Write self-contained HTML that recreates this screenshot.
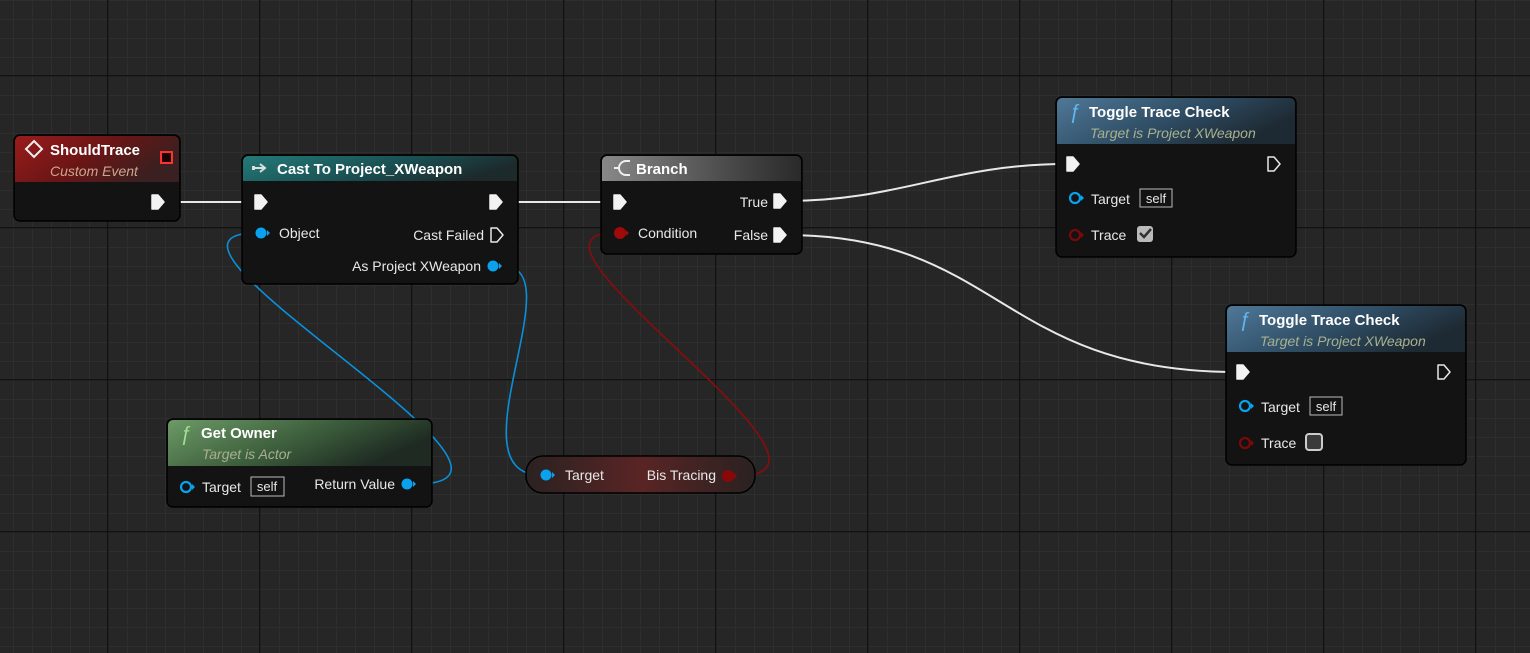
<!DOCTYPE html>
<html><head><meta charset="utf-8"><style>
html,body{margin:0;padding:0}
body{width:1530px;height:653px;overflow:hidden;background:#262626;
background-image:
linear-gradient(to right,#121212 0 1.5px,transparent 1.5px),
linear-gradient(to bottom,#121212 0 1.5px,transparent 1.5px),
linear-gradient(to right,#2e2e2e 0 1px,transparent 1px),
linear-gradient(to bottom,#2e2e2e 0 1px,transparent 1px);
background-size:152px 152px,152px 152px,19px 19px,19px 19px;
background-position:107px 75px,107px 75px,13px 0px,13px 0px;}
svg{position:absolute;left:0;top:0}
text{font-family:"Liberation Sans",sans-serif}
</style></head><body>
<svg width="1530" height="653" viewBox="0 0 1530 653">
<defs>
<linearGradient id="gr" x1="0" y1="0" x2="1" y2="0.4"><stop offset="0" stop-color="#9a1c1c"/><stop offset="0.55" stop-color="#6a1515"/><stop offset="1" stop-color="#3a2020"/></linearGradient>
<linearGradient id="gt" x1="0" y1="0" x2="1" y2="0.3"><stop offset="0" stop-color="#237a78"/><stop offset="0.6" stop-color="#1a4f52"/><stop offset="1" stop-color="#1d2a2c"/></linearGradient>
<linearGradient id="gg" x1="0" y1="0" x2="1" y2="0"><stop offset="0" stop-color="#888"/><stop offset="0.7" stop-color="#444"/><stop offset="1" stop-color="#2a2a2a"/></linearGradient>
<linearGradient id="gb" x1="0" y1="0" x2="1" y2="0.4"><stop offset="0" stop-color="#4f7898"/><stop offset="0.6" stop-color="#2d4a60"/><stop offset="1" stop-color="#1e2a33"/></linearGradient>
<linearGradient id="gn" x1="0" y1="0" x2="1" y2="0.4"><stop offset="0" stop-color="#6c9a66"/><stop offset="0.6" stop-color="#3a5a3a"/><stop offset="1" stop-color="#1e2a22"/></linearGradient>
<linearGradient id="gv" x1="0" y1="0" x2="1" y2="0"><stop offset="0" stop-color="#2a2222"/><stop offset="0.5" stop-color="#5a2424"/><stop offset="1" stop-color="#2a2222"/></linearGradient>
<g id="ex"><path d="M-6,-7 h6 l6,7 l-6,7 h-6 z" fill="#f2f2f2" stroke="#f2f2f2" stroke-width="1.5" stroke-linejoin="round"/></g>
<g id="exo"><path d="M-6,-7 h6 l6,7 l-6,7 h-6 z" fill="none" stroke="#e8e8e8" stroke-width="1.5" stroke-linejoin="round"/></g>
</defs>
<g fill="none" stroke-width="2">
<path d="M166,202 L256,202" stroke="#e8e8e8"/>
<path d="M503,202 L614,202" stroke="#e8e8e8"/>
<path d="M786,201 C 900,201 950,164 1067,164" stroke="#e8e8e8"/>
<path d="M786,235 C 1000,235 1000,372 1237,372" stroke="#e8e8e8"/>
<path d="M416,484 C 580,484 110,233 256,233" stroke="#0a8fd8" stroke-width="1.6"/>
<path d="M503,266 C 575,266 450,475 541,475" stroke="#0a8fd8" stroke-width="1.6"/>
<path d="M737,476 C 880,476 490,233 614,233" stroke="#8a0c0c" stroke-width="1.6"/>
</g>
<rect x="14" y="135" width="166" height="86" rx="6" fill="#121312" stroke="#000" stroke-width="1.5"/>
<path d="M20,136 h154 a5,5 0 0 1 5,5 v41 h-164 v-41 a5,5 0 0 1 5,-5z" fill="url(#gr)"/>
<path d="M34,141 l8,8 l-8,8 l-8,-8z" fill="none" stroke="#eee" stroke-width="2"/>
<text x="50" y="155" font-size="15" font-weight="bold" fill="#fff">ShouldTrace</text>
<text x="50" y="176" font-size="14" font-style="italic" fill="#c8a890">Custom Event</text>
<rect x="161" y="152" width="11" height="11" fill="#1a0000" stroke="#ff3030" stroke-width="2"/>
<use href="#ex" x="158" y="202"/>
<rect x="242" y="155" width="276" height="129" rx="6" fill="#121312" stroke="#000" stroke-width="1.5"/>
<path d="M248,156 h264 a5,5 0 0 1 5,5 v20 h-274 v-20 a5,5 0 0 1 5,-5z" fill="url(#gt)"/>
<path d="M252,168 h12 M260,164 l5,4 l-5,4" stroke="#ddd" stroke-width="2" fill="none"/><rect x="252" y="166" width="3" height="4" fill="#ddd"/>
<text x="277" y="174" font-size="15" font-weight="bold" fill="#fff">Cast To Project_XWeapon</text>
<use href="#ex" x="261" y="202"/><use href="#ex" x="496" y="202"/>
<circle cx="261" cy="233" r="5.5" fill="#0aa2ee"/><path d="M267,230 l3,3 l-3,3z" fill="#0aa2ee"/>
<text x="279" y="238" font-size="14" fill="#e8e8e8">Object</text>
<text x="484" y="240" font-size="14" fill="#e8e8e8" text-anchor="end">Cast Failed</text>
<use href="#exo" x="497" y="235"/>
<text x="481" y="271" font-size="14" fill="#e8e8e8" text-anchor="end">As Project XWeapon</text>
<circle cx="493" cy="266" r="5.5" fill="#0aa2ee"/><path d="M499,263 l3,3 l-3,3z" fill="#0aa2ee"/>
<rect x="601" y="155" width="201" height="99" rx="6" fill="#121312" stroke="#000" stroke-width="1.5"/>
<path d="M607,156 h189 a5,5 0 0 1 5,5 v20 h-199 v-20 a5,5 0 0 1 5,-5z" fill="url(#gg)"/>
<path d="M626,161 a7,7 0 1 0 0,14 M614,168 h5 M626,161 h4 M626,175 h4" stroke="#eee" stroke-width="2" fill="none"/>
<text x="636" y="174" font-size="15" font-weight="bold" fill="#fff">Branch</text>
<use href="#ex" x="620" y="202"/>
<text x="768" y="207" font-size="14" fill="#e8e8e8" text-anchor="end">True</text>
<use href="#ex" x="780" y="201"/>
<circle cx="620" cy="233" r="6" fill="#a00a0a"/><path d="M626,230 l3,3 l-3,3z" fill="#a00a0a"/>
<text x="638" y="238" font-size="14" fill="#e8e8e8">Condition</text>
<text x="768" y="240" font-size="14" fill="#e8e8e8" text-anchor="end">False</text>
<use href="#ex" x="780" y="235"/>
<rect x="1056" y="97" width="240" height="160" rx="6" fill="#121312" stroke="#000" stroke-width="1.5"/>
<path d="M1062,98 h228 a5,5 0 0 1 5,5 v41 h-238 v-41 a5,5 0 0 1 5,-5z" fill="url(#gb)"/>
<text x="1069" y="118" font-size="20" font-style="italic" font-family="Liberation Serif" fill="#5fb8f0">ƒ</text>
<text x="1089" y="117" font-size="15" font-weight="bold" fill="#fff">Toggle Trace Check</text>
<text x="1090" y="138" font-size="14" font-style="italic" fill="#a8b090">Target is Project XWeapon</text>
<use href="#ex" x="1073" y="164"/><use href="#exo" x="1274" y="164"/>
<circle cx="1075" cy="198" r="5" fill="none" stroke="#0aa2ee" stroke-width="2.2"/><path d="M1081,195 l3,3 l-3,3z" fill="#0aa2ee"/>
<text x="1091" y="204" font-size="14" fill="#e8e8e8">Target</text>
<rect x="1140" y="189" width="32" height="18" fill="none" stroke="#bbb" stroke-width="1"/>
<text x="1156" y="203" font-size="13" fill="#e8e8e8" text-anchor="middle">self</text>
<circle cx="1075" cy="235" r="5" fill="none" stroke="#7a0a0a" stroke-width="2.2"/><path d="M1081,232 l3,3 l-3,3z" fill="#7a0a0a"/>
<text x="1091" y="240" font-size="14" fill="#e8e8e8">Trace</text>
<rect x="1137" y="226" width="16" height="16" rx="3" fill="#bbb"/>
<path d="M1140,233 l4,4 l7,-8" stroke="#333" stroke-width="2.5" fill="none"/>
<rect x="1226" y="305" width="240" height="160" rx="6" fill="#121312" stroke="#000" stroke-width="1.5"/>
<path d="M1232,306 h228 a5,5 0 0 1 5,5 v41 h-238 v-41 a5,5 0 0 1 5,-5z" fill="url(#gb)"/>
<text x="1239" y="326" font-size="20" font-style="italic" font-family="Liberation Serif" fill="#5fb8f0">ƒ</text>
<text x="1259" y="325" font-size="15" font-weight="bold" fill="#fff">Toggle Trace Check</text>
<text x="1260" y="346" font-size="14" font-style="italic" fill="#a8b090">Target is Project XWeapon</text>
<use href="#ex" x="1243" y="372"/><use href="#exo" x="1444" y="372"/>
<circle cx="1245" cy="406" r="5" fill="none" stroke="#0aa2ee" stroke-width="2.2"/><path d="M1251,403 l3,3 l-3,3z" fill="#0aa2ee"/>
<text x="1261" y="412" font-size="14" fill="#e8e8e8">Target</text>
<rect x="1310" y="397" width="32" height="18" fill="none" stroke="#bbb" stroke-width="1"/>
<text x="1326" y="411" font-size="13" fill="#e8e8e8" text-anchor="middle">self</text>
<circle cx="1245" cy="443" r="5" fill="none" stroke="#7a0a0a" stroke-width="2.2"/><path d="M1251,440 l3,3 l-3,3z" fill="#7a0a0a"/>
<text x="1261" y="448" font-size="14" fill="#e8e8e8">Trace</text>
<rect x="1306" y="434" width="16" height="16" rx="3" fill="#3a3a3a" stroke="#ccc" stroke-width="2"/>
<rect x="167" y="419" width="265" height="88" rx="6" fill="#121312" stroke="#000" stroke-width="1.5"/>
<path d="M173,420 h253 a5,5 0 0 1 5,5 v41 h-263 v-41 a5,5 0 0 1 5,-5z" fill="url(#gn)"/>
<text x="180" y="440" font-size="20" font-style="italic" font-family="Liberation Serif" fill="#a0e090">ƒ</text>
<text x="201" y="438" font-size="15" font-weight="bold" fill="#fff">Get Owner</text>
<text x="202" y="459" font-size="14" font-style="italic" fill="#a8b090">Target is Actor</text>
<circle cx="186" cy="487" r="5" fill="none" stroke="#0aa2ee" stroke-width="2.2"/><path d="M192,484 l3,3 l-3,3z" fill="#0aa2ee"/>
<text x="202" y="492" font-size="14" fill="#e8e8e8">Target</text>
<rect x="251" y="477" width="33" height="19" fill="none" stroke="#bbb" stroke-width="1"/>
<text x="267" y="491" font-size="13" fill="#e8e8e8" text-anchor="middle">self</text>
<text x="395" y="489" font-size="14" fill="#e8e8e8" text-anchor="end">Return Value</text>
<circle cx="407" cy="484" r="5.5" fill="#0aa2ee"/><path d="M413,481 l3,3 l-3,3z" fill="#0aa2ee"/>
<rect x="526" y="456" width="229" height="37" rx="17" fill="url(#gv)" stroke="#000" stroke-width="1.5"/>
<circle cx="546" cy="475" r="5.5" fill="#0aa2ee"/><path d="M552,472 l3,3 l-3,3z" fill="#0aa2ee"/>
<text x="565" y="480" font-size="14" fill="#e8e8e8">Target</text>
<text x="716" y="480" font-size="14" fill="#e8e8e8" text-anchor="end">Bis Tracing</text>
<circle cx="728" cy="476" r="6" fill="#8a0808"/><path d="M734,473 l3,3 l-3,3z" fill="#8a0808"/>
</svg>
</body></html>
